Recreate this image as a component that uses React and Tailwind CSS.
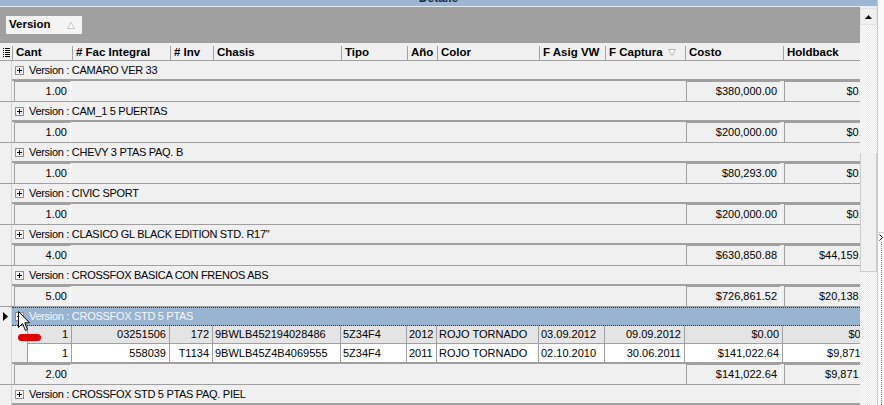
import React from "react";

const headers = [
  { label: "Cant", w: "w-[60px]" },
  { label: "# Fac Integral", w: "w-[98px]" },
  { label: "# Inv", w: "w-[43px]" },
  { label: "Chasis", w: "w-[128px]" },
  { label: "Tipo", w: "w-[66px]" },
  { label: "Año", w: "w-[30px]" },
  { label: "Color", w: "w-[102px]" },
  { label: "F Asig VW", w: "w-[66px]" },
  { label: "F Captura", w: "w-[80px]", sort: true },
  { label: "Costo", w: "w-[98px]" },
  { label: "Holdback", w: "w-[97px]" },
];

const dataCols = [
  { w: "w-[44px]", right: true },
  { w: "w-[98px]", right: true },
  { w: "w-[43px]", right: true },
  { w: "w-[128px]" },
  { w: "w-[66px]" },
  { w: "w-[30px]" },
  { w: "w-[102px]" },
  { w: "w-[66px]" },
  { w: "w-[80px]", right: true },
  { w: "w-[98px]", right: true },
  { w: "w-[97px]", right: true },
];

const groups = [
  { name: "CAMARO VER 33", cant: "1.00", costo: "$380,000.00", hold: "$0.00" },
  { name: "CAM_1 5 PUERTAS", cant: "1.00", costo: "$200,000.00", hold: "$0.00" },
  { name: "CHEVY 3 PTAS PAQ. B", cant: "1.00", costo: "$80,293.00", hold: "$0.00" },
  { name: "CIVIC SPORT", cant: "1.00", costo: "$200,000.00", hold: "$0.00" },
  { name: 'CLASICO GL BLACK EDITION STD. R17"', cant: "4.00", costo: "$630,850.88", hold: "$44,159.56" },
  { name: "CROSSFOX BASICA CON FRENOS ABS", cant: "5.00", costo: "$726,861.52", hold: "$20,138.31" },
];

const rows = [
  ["1", "03251506", "172", "9BWLB452194028486", "5Z34F4", "2012", "ROJO TORNADO", "03.09.2012", "09.09.2012", "$0.00", "$0.00"],
  ["1", "558039", "T1134", "9BWLB45Z4B4069555", "5Z34F4", "2011", "ROJO TORNADO", "02.10.2010", "30.06.2011", "$141,022.64", "$9,871.58"],
];

function ExpandBox({ minus }) {
  return (
    <svg width="9" height="9" viewBox="0 0 9 9" className="shrink-0">
      <rect x="0.5" y="0.5" width="8" height="8" fill="#fafafa" stroke="#8f8f8f" />
      <rect x="2" y="4" width="5" height="1" fill="#000" />
      {!minus && <rect x="4" y="2" width="1" height="5" fill="#000" />}
    </svg>
  );
}

function Indicator({ children }) {
  return (
    <div className="w-[12px] shrink-0 h-full flex items-center justify-center border-r border-[#d4d4d4]">
      {children}
    </div>
  );
}

function GroupRow({ name }) {
  return (
    <div className="flex h-[20px]">
      <Indicator />
      <div className="flex-1 flex items-center border-b-2 border-[#a0a0a0]">
        <div className="ml-[3px]">
          <ExpandBox />
        </div>
        <span className="ml-[5px] tracking-[-0.3px]">Version : {name}</span>
      </div>
    </div>
  );
}

function SumBox({ value, w }) {
  return (
    <div className={`${w} ml-[2px] h-[20px] border-t border-l border-[#a0a0a0] border-r border-r-white flex items-center justify-end pr-[3px]`}>
      {value}
    </div>
  );
}

function SummaryRow({ cant, costo, hold }) {
  return (
    <div className="flex h-[21px] border-b border-[#a0a0a0]">
      <Indicator />
      <div className="w-[59px] flex">
        <SumBox value={cant} w="w-[57px]" />
      </div>
      <div className="w-[613px]" />
      <div className="w-[98px] flex">
        <SumBox value={costo} w="w-[95px]" />
      </div>
      <div className="w-[97px] flex">
        <SumBox value={hold} w="w-[94px]" />
      </div>
    </div>
  );
}

function DataRow({ cells, shade, last }) {
  return (
    <div className={`flex ${last ? "h-[20px]" : "h-[18px]"}`}>
      <Indicator />
      <div className={`flex flex-1 ${last ? "border-b-2 border-[#a0a0a0]" : ""}`}>
        <div className="w-[15px]" />
        <div className={`flex ${shade ? "bg-[#e4e4e4]" : "bg-white"} ${last ? "" : "border-b border-[#a0a0a0]"}`}>
          {cells.map((c, i) => (
            <div
              key={i}
              className={`${dataCols[i].w} border-l border-[#a0a0a0] flex items-center ${dataCols[i].right ? "justify-end pr-[3px]" : "pl-[2px]"}`}
            >
              {c}
            </div>
          ))}
        </div>
      </div>
    </div>
  );
}

export default function App() {
  return (
    <div className="relative w-[884px] h-[405px] overflow-hidden flex bg-[#f0f0f0] text-[11px] text-black font-['Liberation_Sans',Arial,sans-serif]">
      <div className="w-[877px] flex flex-col">
        {/* title bar */}
        <div className="h-[6px] bg-[#9db6d3] flex justify-center overflow-hidden">
          <span className="text-[12px] font-bold leading-[12px] -mt-[8px] text-[#1b2b45]">Detalle</span>
        </div>
        <div className="h-px bg-[#e4eaf2]" />

        <div className="flex flex-1">
          <div className="w-[860px] overflow-hidden flex flex-col">
            {/* group by panel */}
            <div className="h-[36px] bg-[#a0a0a0] pl-[6px] pt-[9px]">
              <div className="w-[76px] h-[18px] bg-[#f4f4f4] flex items-center pl-[3px] font-bold text-[11.5px]">
                Version
                <svg width="8" height="7" viewBox="0 0 8 7" className="ml-[16px]">
                  <polygon points="4,0.5 7.5,6.5 0.5,6.5" fill="#fff" stroke="#c4c4c4" />
                </svg>
              </div>
            </div>

            <div className="w-[880px] flex flex-col">
              {/* header */}
              <div className="flex h-[18px] border-b border-[#a0a0a0]">
                <div className="w-[12px] flex items-center justify-center pt-[2px]">
                  <svg width="7" height="9" viewBox="0 0 7 9">
                    {[0, 2, 4, 6, 8].map((y) => (
                      <g key={y}>
                        <rect x="0" y={y} width="1" height="1" fill="#000" />
                        <rect x="2" y={y} width="5" height="1" fill="#000" />
                      </g>
                    ))}
                  </svg>
                </div>
                {headers.map((h) => (
                  <div key={h.label} className={`${h.w} flex items-center pt-[2px]`}>
                    <div className="w-px h-[14px] bg-[#a0a0a0]" />
                    <span className="pl-[3px] font-bold text-[11.5px]">{h.label}</span>
                    {h.sort && (
                      <svg width="8" height="7" viewBox="0 0 8 7" className="ml-[5px]">
                        <polygon points="0.5,0.5 7.5,0.5 4,6.5" fill="#fff" stroke="#b8b8b8" />
                      </svg>
                    )}
                  </div>
                ))}
              </div>

              {groups.map((g) => (
                <React.Fragment key={g.name}>
                  <GroupRow name={g.name} />
                  <SummaryRow cant={g.cant} costo={g.costo} hold={g.hold} />
                </React.Fragment>
              ))}

              {/* selected, expanded group */}
              <div className="flex h-[19px]">
                <Indicator>
                  <svg width="5" height="9" viewBox="0 0 5 9">
                    <polygon points="0,0 5,4.5 0,9" fill="#000" />
                  </svg>
                </Indicator>
                <div className="flex-1 flex items-center bg-[#99b4d1] border-y border-dotted border-[#333]">
                  <div className="ml-[3px]">
                    <ExpandBox minus />
                  </div>
                  <span className="ml-[5px] tracking-[-0.3px] text-[#f4f7fb]">Version : CROSSFOX STD 5 PTAS</span>
                </div>
              </div>
              {rows.map((r, i) => (
                <DataRow key={i} cells={r} shade={i === 0} last={i === rows.length - 1} />
              ))}
              <SummaryRow cant="2.00" costo="$141,022.64" hold="$9,871.58" />
              <GroupRow name="CROSSFOX STD 5 PTAS PAQ. PIEL" />
            </div>
          </div>

          {/* vertical scrollbar */}
          <div className="w-[17px] flex flex-col bg-[image:repeating-conic-gradient(#ffffff_0%_25%,#e8e8e8_0%_50%)] bg-[length:2px_2px]">
            <div className="mt-px h-[17px] bg-[#f0f0f0] border border-[#e2e2e2] flex items-center justify-center">
              <svg width="7" height="4" viewBox="0 0 7 4">
                <polygon points="3.5,0 7,4 0,4" fill="#000" />
              </svg>
            </div>
            <div className="h-[128px]" />
            <div className="h-[119px] bg-[#f0f0f0] border-x border-b border-[#cdcdcd]" />
          </div>
        </div>
      </div>

      {/* right edge strip */}
      <div className="w-[7px] border-l border-[#c8c8c8] bg-[#fafafa] flex flex-col">
        <div className="h-[232px]" />
        <div className="h-[10px] flex items-center justify-center border-t border-[#d0d0d0]">
          <svg width="4" height="7" viewBox="0 0 4 7">
            <polyline points="0.5,0.5 3.5,3.5 0.5,6.5" fill="none" stroke="#000" strokeWidth="1" />
          </svg>
        </div>
        <div className="flex-1 ml-[3px] border-l border-dotted border-[#3a7bd5]" />
      </div>

      {/* mouse pointer over the expander */}
      <svg width="13" height="21" viewBox="0 0 13 21" className="absolute left-[18px] top-[311px]">
        <path d="M0.5 0.5 L0.5 16.5 L4.5 12.5 L7.5 19.5 L9.5 18.5 L6.8 11.8 L11.5 11.8 Z" fill="#fff" stroke="#000" strokeWidth="1" />
      </svg>

      {/* red marker */}
      <div className="absolute left-[18px] top-[334px] w-[23px] h-[7px] rounded-full bg-[#dd0000]" />
    </div>
  );
}
